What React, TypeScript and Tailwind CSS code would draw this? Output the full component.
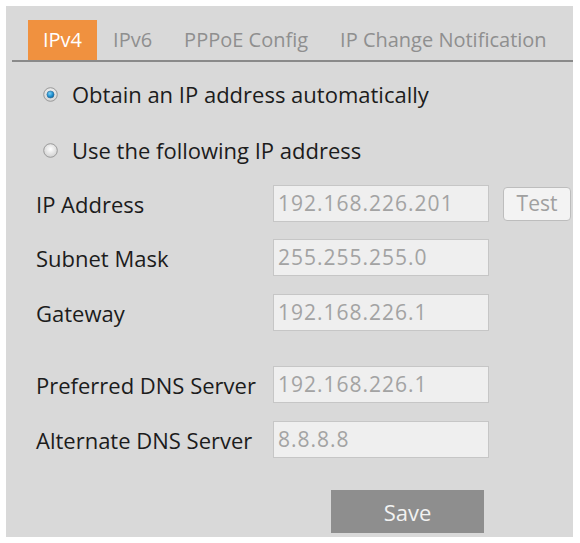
import React from "react";

const font = { fontFamily: '"Open Sans", "Noto Sans", sans-serif' };

function Radio({ checked }: { checked: boolean }) {
  return (
    <svg width="15" height="15" viewBox="0 0 15 15" className="shrink-0">
      <defs>
        <radialGradient id={checked ? "rg1" : "rg2"} cx="50%" cy="40%" r="60%">
          <stop offset="0%" stopColor="#ffffff" />
          <stop offset="100%" stopColor="#d0d0d0" />
        </radialGradient>
        <radialGradient id="dot" cx="40%" cy="35%" r="70%">
          <stop offset="0%" stopColor="#7fd0f5" />
          <stop offset="60%" stopColor="#1e8fd0" />
          <stop offset="100%" stopColor="#0b5f95" />
        </radialGradient>
      </defs>
      <circle cx="7.5" cy="7.5" r="6.8" fill={`url(#${checked ? "rg1" : "rg2"})`} stroke="#9a9a9a" strokeWidth="1" />
      {checked && <circle cx="7.5" cy="7.5" r="3.6" fill="url(#dot)" stroke="#3a6f93" strokeWidth="0.6" />}
    </svg>
  );
}

function Row({ label, value, mt, test }: { label: string; value: string; mt: string; test?: boolean }) {
  return (
    <div className={`flex items-center h-[37px] ${mt}`}>
      <div className="w-[237px] text-[22px] text-[#1c1c1c] leading-none whitespace-nowrap">{label}</div>
      <div className="w-[216px] h-[37px] bg-[#efefef] border border-[#c6c6c6] flex items-center pl-[4px] pb-[1px] text-[21px] tracking-[1px] text-[#a3a3a3] leading-none">
        {value}
      </div>
      {test && (
        <div className="ml-[14px] w-[68px] h-[34px] bg-[#f3f3f3] border border-[#bdbdbd] rounded-[4px] flex items-center justify-center text-[21px] text-[#a0a0a0] leading-none">
          Test
        </div>
      )}
    </div>
  );
}

export default function App() {
  return (
    <div className="w-[580px] h-[543px] bg-white pt-[6px] pl-[6px]" style={font}>
      <div className="w-[567px] h-[531px] bg-[#d9d9d9] flex flex-col">
        <div className="mt-[14px] ml-[6px] border-b-2 border-[#8a8a8a] flex pl-[16px] h-[42px] text-[20px] leading-none">
          <div className="h-[40px] px-[15px] bg-[#f0913f] text-white flex items-center">IPv4</div>
          <div className="h-[40px] px-[16px] text-[#8f8f8f] flex items-center">IPv6</div>
          <div className="h-[40px] px-[16px] text-[#8f8f8f] flex items-center">PPPoE Config</div>
          <div className="h-[40px] px-[16px] text-[#8f8f8f] flex items-center whitespace-nowrap">IP Change Notification</div>
        </div>
        <div className="pt-[4px] pl-[37px] text-[22px] text-[#1c1c1c] leading-none">
          <div className="h-[56px] flex items-center gap-[14px]">
            <Radio checked />
            <span>Obtain an IP address automatically</span>
          </div>
          <div className="h-[56px] flex items-center gap-[14px]">
            <Radio checked={false} />
            <span>Use the following IP address</span>
          </div>
        </div>
        <div className="pl-[30px] flex flex-col">
          <Row label="IP Address" value="192.168.226.201" mt="mt-[7px]" test />
          <Row label="Subnet Mask" value="255.255.255.0" mt="mt-[17px]" />
          <Row label="Gateway" value="192.168.226.1" mt="mt-[18px]" />
          <Row label="Preferred DNS Server" value="192.168.226.1" mt="mt-[35px]" />
          <Row label="Alternate DNS Server" value="8.8.8.8" mt="mt-[18px]" />
        </div>
        <div className="mt-[32px] ml-[325px] w-[153px] h-[43px] bg-[#8e8e8e] text-[#f2f2f2] text-[22px] flex items-center justify-center leading-none">
          Save
        </div>
      </div>
    </div>
  );
}
